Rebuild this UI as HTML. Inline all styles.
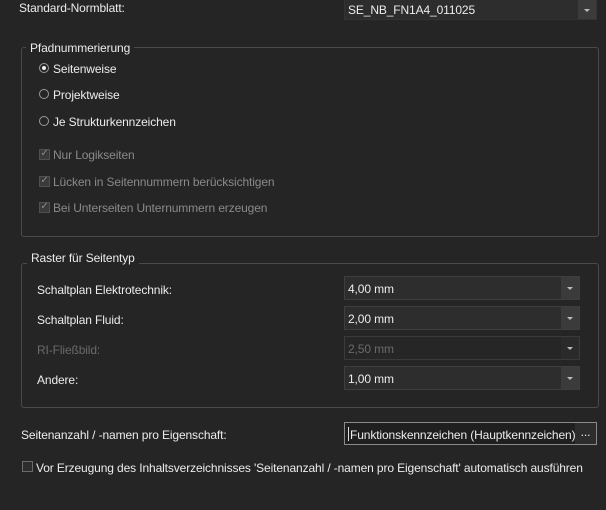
<!DOCTYPE html>
<html><head><style>
body{margin:0;width:606px;height:510px;background:#252526;font-family:"Liberation Sans",sans-serif;font-size:12px;letter-spacing:-0.12px;color:#ececec;position:relative;overflow:hidden}
.a{position:absolute;white-space:nowrap;line-height:14px}
.grp{position:absolute;border:1px solid #4a4a4a;border-radius:3px}
.gt{position:absolute;background:#252526;padding:0 4px;line-height:14px}
.dd{position:absolute;height:24px;border:1px solid #3e3e3e;background:#2d2d2d;box-sizing:border-box}
.dd .v{position:absolute;left:3px;top:5px;line-height:14px}
.dd .ar{position:absolute;right:0;top:0;bottom:0;width:18px;background:#3b3b3b}
.dd .ar:after{content:"";position:absolute;left:6px;top:10px;border:3px solid transparent;border-top:3px solid #bbb}
.rd{position:absolute;width:10px;height:10px;border:1px solid #9a9a9a;border-radius:50%;box-sizing:border-box}
.cb{position:absolute;width:11px;height:11px;background:#3a3a3a;border:1px solid #505050;box-sizing:border-box}
.dis{color:#8a8a8a}
</style></head><body>
<div class="a" style="left:19px;top:1px">Standard-Normblatt:</div>
<div class="dd" style="left:344px;top:-2px;width:253px;height:22px;border-color:#333"><span class="v" style="top:4px">SE_NB_FN1A4_011025</span><div class="ar"></div></div>

<div class="grp" style="left:21px;top:47px;width:576px;height:188px"></div>
<div class="gt" style="left:26px;top:41px">Pfadnummerierung</div>
<div class="rd" style="left:39px;top:63px"></div><div style="position:absolute;left:42px;top:66px;width:4px;height:4px;border-radius:50%;background:#eee"></div>
<div class="a" style="left:53px;top:62px">Seitenweise</div>
<div class="rd" style="left:39px;top:89px"></div><div class="a" style="left:53px;top:88px">Projektweise</div>
<div class="rd" style="left:39px;top:116px"></div><div class="a" style="left:53px;top:115px">Je Strukturkennzeichen</div>
<div class="cb" style="left:39px;top:149px"></div><div class="a dis" style="left:39px;top:147px;width:11px;font-size:10px;text-align:center">✓</div><div class="a dis" style="left:53px;top:148px">Nur Logikseiten</div>
<div class="cb" style="left:39px;top:176px"></div><div class="a dis" style="left:39px;top:174px;width:11px;font-size:10px;text-align:center">✓</div><div class="a dis" style="left:53px;top:175px">Lücken in Seitennummern berücksichtigen</div>
<div class="cb" style="left:39px;top:202px"></div><div class="a dis" style="left:39px;top:200px;width:11px;font-size:10px;text-align:center">✓</div><div class="a dis" style="left:53px;top:201px">Bei Unterseiten Unternummern erzeugen</div>

<div class="grp" style="left:21px;top:263px;width:576px;height:143px"></div>
<div class="gt" style="left:27px;top:251px">Raster für Seitentyp</div>
<div class="a" style="left:37px;top:283px">Schaltplan Elektrotechnik:</div>
<div class="dd" style="left:344px;top:276px;width:236px"><span class="v">4,00 mm</span><div class="ar"></div></div>
<div class="a" style="left:37px;top:313px">Schaltplan Fluid:</div>
<div class="dd" style="left:344px;top:306px;width:236px"><span class="v">2,00 mm</span><div class="ar"></div></div>
<div class="a dis" style="left:37px;top:343px;color:#6a6a6a">RI-Fließbild:</div>
<div class="dd" style="left:344px;top:336px;width:236px;background:#262626;border-color:#3a3a3a"><span class="v" style="color:#6a6a6a">2,50 mm</span><div class="ar" style="background:#2a2a2a"></div></div>
<div class="a" style="left:37px;top:373px">Andere:</div>
<div class="dd" style="left:344px;top:366px;width:236px"><span class="v">1,00 mm</span><div class="ar"></div></div>

<div class="a" style="left:21px;top:428px">Seitenanzahl / -namen pro Eigenschaft:</div>
<div class="dd" style="left:344px;top:422px;width:253px;height:23px;border-color:#8a8a8a;background:#1f1f1f;overflow:hidden"><span class="v" style="left:5px">Funktionskennzeichen (Hauptkennzeichen)</span><div style="position:absolute;left:3px;top:4px;width:1px;height:14px;background:#ddd"></div><div style="position:absolute;right:0;top:0;bottom:0;width:21px;background:#2d2d2d;text-align:center;line-height:18px">...</div></div>

<div class="cb" style="left:22px;top:461px;width:11px;height:11px;background:#2d2d2d;border-color:#6a6a6a"></div>
<div class="a" style="left:36px;top:461px">Vor Erzeugung des Inhaltsverzeichnisses 'Seitenanzahl / -namen pro Eigenschaft' automatisch ausführen</div>
</body></html>
